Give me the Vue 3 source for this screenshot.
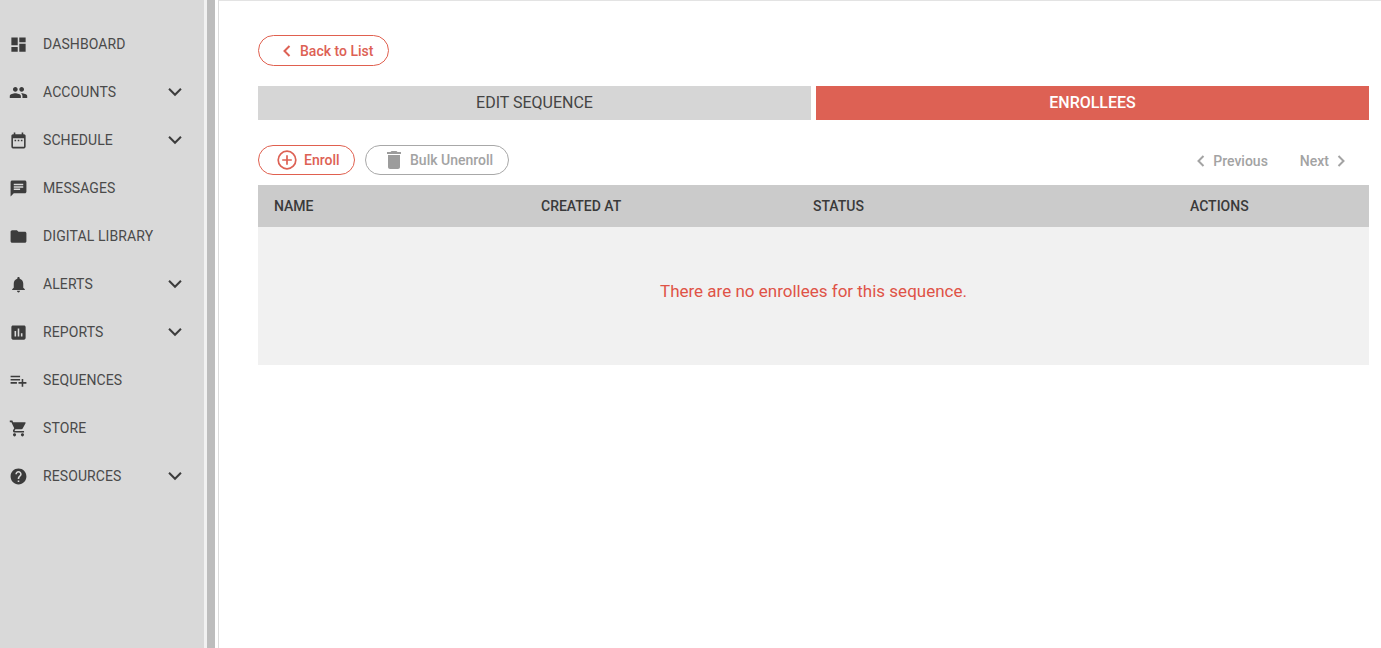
<script setup>
const icons = {
  dashboard: 'M3 13h8V3H3v10zm0 8h8v-6H3v6zm10 0h8V11h-8v10zm0-18v6h8V3h-8z',
  people: 'M16 11c1.66 0 2.99-1.34 2.99-3S17.66 5 16 5c-1.66 0-3 1.34-3 3s1.34 3 3 3zm-8 0c1.66 0 2.99-1.34 2.99-3S9.66 5 8 5C6.34 5 5 6.34 5 8s1.34 3 3 3zm0 2c-2.33 0-7 1.17-7 3.5V19h14v-2.5c0-2.33-4.67-3.5-7-3.5zm8 0c-.29 0-.62.02-.97.05 1.16.84 1.97 1.97 1.97 3.45V19h6v-2.5c0-2.33-4.67-3.5-7-3.5z',
  calendar: 'M7 11h2v2H7zm4 0h2v2h-2zm4 0h2v2h-2zM19 4h-1V2h-2v2H8V2H6v2H5c-1.11 0-1.99.9-1.99 2L3 20a2 2 0 0 0 2 2h14c1.1 0 2-.9 2-2V6c0-1.1-.9-2-2-2zm0 16H5V9h14v11z',
  message: 'M20 2H4c-1.1 0-1.99.9-1.99 2L2 22l4-4h14c1.1 0 2-.9 2-2V4c0-1.1-.9-2-2-2zM6 9h12v2H6V9zm8 5H6v-2h8v2zm4-6H6V6h12v2z',
  folder: 'M10 4H4c-1.1 0-1.99.9-1.99 2L2 18c0 1.1.9 2 2 2h16c1.1 0 2-.9 2-2V8c0-1.1-.9-2-2-2h-8l-2-2z',
  bell: 'M12 22c1.1 0 2-.9 2-2h-4c0 1.1.89 2 2 2zm6-6v-5c0-3.07-1.64-5.64-4.5-6.32V4c0-.83-.67-1.5-1.5-1.5s-1.5.67-1.5 1.5v.68C7.63 5.36 6 7.92 6 11v5l-2 2v1h16v-1l-2-2z',
  report: 'M19 3H5c-1.1 0-2 .9-2 2v14c0 1.1.9 2 2 2h14c1.1 0 2-.9 2-2V5c0-1.1-.9-2-2-2zM9 17H7v-7h2v7zm4 0h-2V7h2v10zm4 0h-2v-4h2v4z',
  playlist: 'M14 10H2v2h12v-2zm0-4H2v2h12V6zm4 8v-4h-2v4h-4v2h4v4h2v-4h4v-2h-4zM2 16h8v-2H2v2z',
  cart: 'M7 18c-1.1 0-1.99.9-1.99 2S5.9 22 7 22s2-.9 2-2-.9-2-2-2zM1 2v2h2l3.6 7.59-1.35 2.45c-.16.28-.25.61-.25.96 0 1.1.9 2 2 2h12v-2H7.42c-.14 0-.25-.11-.25-.25l.03-.12.9-1.63h7.45c.75 0 1.41-.41 1.75-1.03l3.58-6.49A1 1 0 0 0 20 4H5.21l-.94-2H1zm16 16c-1.1 0-1.99.9-1.99 2s.89 2 1.99 2 2-.9 2-2-.9-2-2-2z',
  help: 'M12 2C6.48 2 2 6.48 2 12s4.48 10 10 10 10-4.48 10-10S17.52 2 12 2zm1 17h-2v-2h2v2zm2.07-7.75-.9.92C13.45 12.9 13 13.5 13 15h-2v-.5c0-1.1.45-2.1 1.17-2.83l1.24-1.26c.37-.36.59-.86.59-1.41 0-1.1-.9-2-2-2s-2 .9-2 2H8c0-2.21 1.79-4 4-4s4 1.79 4 4c0 .88-.36 1.68-.93 2.25z'
}
const nav = [
  { label: 'DASHBOARD', icon: 'dashboard' },
  { label: 'ACCOUNTS', icon: 'people', more: true },
  { label: 'SCHEDULE', icon: 'calendar', more: true },
  { label: 'MESSAGES', icon: 'message' },
  { label: 'DIGITAL LIBRARY', icon: 'folder' },
  { label: 'ALERTS', icon: 'bell', more: true },
  { label: 'REPORTS', icon: 'report', more: true },
  { label: 'SEQUENCES', icon: 'playlist' },
  { label: 'STORE', icon: 'cart' },
  { label: 'RESOURCES', icon: 'help', more: true }
]
</script>

<template>
  <div class="page">
    <aside class="sidebar">
      <nav class="nav">
        <div v-for="item in nav" :key="item.label" class="nav-item">
          <svg class="nav-icon" viewBox="0 0 24 24"><path :d="icons[item.icon]" /></svg>
          <span class="nav-label">{{ item.label }}</span>
          <svg v-if="item.more" class="nav-caret" viewBox="0 0 24 24"><path d="M5.5 8.5 12 15l6.5-6.5" /></svg>
        </div>
      </nav>
    </aside>
    <div class="splitter"></div>
    <main class="main">
      <div class="back-row">
        <button class="pill pill-red back">
          <svg class="chev" viewBox="0 0 16 16"><path d="M10.5 3l-5 5 5 5" /></svg>
          Back to List
        </button>
      </div>
      <div class="tabs">
        <div class="tab">EDIT SEQUENCE</div>
        <div class="tab active">ENROLLEES</div>
      </div>
      <div class="toolbar">
        <div class="actions">
          <button class="pill pill-red enroll">
            <svg class="plus" viewBox="0 0 20 20"><circle cx="10" cy="10" r="8.8" /><path d="M10 5.2v9.6M5.2 10h9.6" /></svg>
            Enroll
          </button>
          <button class="pill pill-grey unenroll">
            <svg class="trash" viewBox="0 0 24 24"><path d="M6 19c0 1.1.9 2 2 2h8c1.1 0 2-.9 2-2V7H6v12zM19 4h-3.5l-1-1h-5l-1 1H5v2h14V4z" /></svg>
            Bulk Unenroll
          </button>
        </div>
        <div class="pager">
          <span class="pager-link">
            <svg class="chev small" viewBox="0 0 16 16"><path d="M10.5 3l-5 5 5 5" /></svg>
            Previous
          </span>
          <span class="pager-link">
            Next
            <svg class="chev small" viewBox="0 0 16 16"><path d="M5.5 3l5 5-5 5" /></svg>
          </span>
        </div>
      </div>
      <div class="table-head">
        <span class="col-name">NAME</span>
        <span class="col-created">CREATED AT</span>
        <span class="col-status">STATUS</span>
        <span class="col-actions">ACTIONS</span>
      </div>
      <div class="table-empty">There are no enrollees for this sequence.</div>
    </main>
  </div>
</template>

<style>
html, body { margin: 0; background: #fff; overflow: hidden; }
</style>

<style scoped>
.page {
  display: flex;
  height: 648px;
  width: 1381px;
  font-family: Roboto, "Liberation Sans", sans-serif;
  color: #444;
  overflow: hidden;
}
.sidebar { width: 204px; flex: none; background: #d9d9d9; }
.nav { padding-top: 20px; }
.nav-item { height: 48px; display: flex; align-items: center; position: relative; }
.nav-icon { width: 19px; height: 19px; margin-left: 8.5px; flex: none; fill: #3c3c3c; }
.nav-label { margin-left: 15.5px; font-size: 14px; letter-spacing: 0.1px; color: #4a4a4a; }
.nav-caret { position: absolute; left: 164px; width: 22px; height: 22px; fill: none; stroke: #3c3c3c; stroke-width: 2.2; }
.splitter {
  width: 15px;
  flex: none;
  box-sizing: border-box;
  background: #fff;
  border-left: 3px solid #f1f1f1;
  border-right: 1px solid #dcdcdc;
  position: relative;
}
.splitter::before {
  content: "";
  position: absolute;
  left: 0;
  top: 0;
  bottom: 0;
  width: 8px;
  background: #bdbdbd;
}
.main { flex: 1; min-width: 0; padding: 34px 12px 0 39px; border-top: 1px solid #e3e3e3; box-sizing: border-box; }
.back-row { height: 31px; margin-bottom: 20px; }
button { font-family: inherit; background: #fff; padding: 0; cursor: pointer; }
.pill {
  box-sizing: border-box;
  display: inline-flex;
  align-items: center;
  border-radius: 16px;
  font-size: 14px;
  font-weight: 500;
}
.pill-red { border: 1px solid #e0604f; color: #dd6154; }
.pill-grey { border: 1px solid #a8a8a8; color: #a3a3a3; }
.back { width: 131px; height: 31px; padding-left: 20px; }
.chev { width: 16px; height: 16px; flex: none; fill: none; stroke: #dd6154; stroke-width: 2; margin-right: 5px; }
.chev.small { stroke: #a3a3a3; margin: 0; }
.tabs { display: flex; gap: 5px; height: 34px; }
.tab {
  box-sizing: border-box;
  flex: 1;
  padding-bottom: 2px;
  background: #d6d6d6;
  color: #444;
  font-size: 16px;
  display: flex;
  align-items: center;
  justify-content: center;
}
.tab.active { background: #dd6154; color: #fff; font-weight: 500; }
.toolbar { display: flex; justify-content: space-between; align-items: flex-start; margin-top: 25px; height: 31px; margin-bottom: 9px; }
.actions { display: flex; gap: 10px; }
.enroll { width: 97px; height: 30px; padding-left: 18px; }
.plus { width: 20px; height: 20px; margin-right: 7px; fill: none; stroke: #dd6154; stroke-width: 1.7; }
.unenroll { width: 144px; height: 30px; padding-left: 16px; }
.trash { width: 24px; height: 24px; margin-right: 4px; fill: #9c9c9c; }
.pager { display: flex; gap: 32px; padding: 8px 20px 0 0; font-size: 14px; font-weight: 500; color: #a3a3a3; }
.pager-link { display: inline-flex; align-items: center; gap: 4px; }
.table-head {
  display: flex;
  align-items: center;
  height: 42px;
  background: #cbcbcb;
  font-size: 14px;
  font-weight: 500;
  color: #3a3a3a;
}
.col-name { margin-left: 16px; width: 267px; }
.col-created { width: 272px; }
.col-status { width: 377px; }
.table-empty {
  box-sizing: border-box;
  height: 138px;
  padding-bottom: 10px;
  background: #f1f1f1;
  color: #df5347;
  font-size: 17px;
  display: flex;
  align-items: center;
  justify-content: center;
}
</style>
